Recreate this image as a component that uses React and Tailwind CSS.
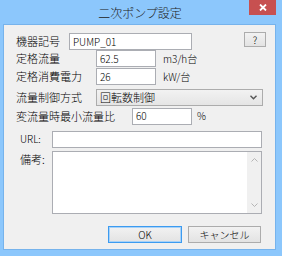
const FONT = "font-['Noto_Sans_CJK_JP',sans-serif] font-light"

function Field({ value, className = '' }) {
  return (
    <div className={`flex items-center h-[17px] bg-white border border-[#abadb3] pl-[3px] text-[10px] leading-none text-black ${className}`}>
      {value}
    </div>
  )
}

function Btn({ children, primary, className = '' }) {
  return (
    <div
      className={`flex items-center justify-center bg-gradient-to-b from-[#f2f2f2] to-[#e3e3e3] border text-[10px] leading-none text-black ${
        primary ? 'border-[#3c9bf0] ring-1 ring-inset ring-[#a8d2f8]' : 'border-[#acacac]'
      } ${className}`}
    >
      {children}
    </div>
  )
}

export default function App() {
  return (
    <div className={`w-[282px] h-[256px] bg-[#8cc7fc] flex flex-col ${FONT}`}>
      {/* title bar */}
      <div className="relative h-[24px] flex items-center justify-center shrink-0">
        <span className="text-[12px] leading-none text-[#222] pr-[2px] pt-[1px]">二次ポンプ設定</span>
        <div className="absolute left-[249px] top-0 w-[27px] h-[15px] bg-[#c75050] flex items-center justify-center">
          <svg width="8" height="7" viewBox="0 0 8 7">
            <path d="M1 0.5 L7 6.5 M7 0.5 L1 6.5" stroke="#fff" strokeWidth="1.8" />
          </svg>
        </div>
      </div>

      {/* client */}
      <div className="ml-[3px] w-[273px] h-[226px] border border-[#76b3ec] bg-[#f0f0f0] pt-[7px] pl-[12px] pr-[9px] flex flex-col text-[11px] leading-none text-black">
        {/* 機器記号 */}
        <div className="flex h-[18px]">
          <span className="w-[53px] self-center pt-[1px]">機器記号</span>
          <Field value="PUMP_01" className="w-[123px] h-[16px] self-end" />
          <Btn className="ml-auto w-[22px] h-[15px] self-start">?</Btn>
        </div>

        {/* 定格流量 */}
        <div className="flex items-center h-[17px]">
          <span className="w-[80px]">定格流量</span>
          <Field value="62.5" className="w-[60px]" />
          <span className="ml-[7px] text-[10px]">m3/h台</span>
        </div>

        {/* 定格消費電力 */}
        <div className="flex items-center h-[17px] mt-[1px]">
          <span className="w-[80px]">定格消費電力</span>
          <Field value="26" className="w-[60px]" />
          <span className="ml-[7px] text-[10px]">kW/台</span>
        </div>

        {/* 流量制御方式 */}
        <div className="flex items-center h-[17px] mt-[4px]">
          <span className="w-[80px]">流量制御方式</span>
          <div className="w-[167px] h-[17px] flex items-center justify-between bg-gradient-to-b from-[#f2f2f2] to-[#e5e5e5] border border-[#acacac] pl-[3px] pr-[5px]">
            <span className="text-[11px]">回転数制御</span>
            <svg width="7" height="5" viewBox="0 0 7 5">
              <path d="M0.5 0.8 L3.5 3.8 L6.5 0.8" stroke="#555" strokeWidth="1.4" fill="none" />
            </svg>
          </div>
        </div>

        {/* 変流量時最小流量比 */}
        <div className="flex items-center h-[16px] mt-[2px]">
          <span className="w-[116px]">変流量時最小流量比</span>
          <Field value="60" className="w-[60px] h-[16px]" />
          <span className="ml-[5px] text-[10px]">%</span>
        </div>

        {/* URL */}
        <div className="flex items-center h-[16px] mt-[7px]">
          <span className="w-[36px] pl-[4px] text-[10px]">URL:</span>
          <Field value="" className="w-[210px] h-[16px]" />
        </div>

        {/* 備考 */}
        <div className="flex mt-[4px]">
          <span className="w-[36px] pl-[4px] pt-[3px]">備考:</span>
          <div className="w-[210px] h-[63px] bg-white border border-[#abadb3] flex justify-end">
            <div className="w-[14px] bg-[#f0f0f0] flex flex-col items-center justify-between py-[6px]">
              <svg width="7" height="4" viewBox="0 0 7 4">
                <path d="M0.5 3.5 L3.5 0.5 L6.5 3.5" stroke="#b5b5b5" strokeWidth="1" fill="none" />
              </svg>
              <svg width="7" height="4" viewBox="0 0 7 4">
                <path d="M0.5 0.5 L3.5 3.5 L6.5 0.5" stroke="#b5b5b5" strokeWidth="1" fill="none" />
              </svg>
            </div>
          </div>
        </div>

        {/* buttons */}
        <div className="flex justify-end gap-[6px] mt-[12px] pr-[5px]">
          <Btn primary className="w-[74px] h-[17px]">OK</Btn>
          <Btn className="w-[73px] h-[17px]">キャンセル</Btn>
        </div>
      </div>
    </div>
  )
}
